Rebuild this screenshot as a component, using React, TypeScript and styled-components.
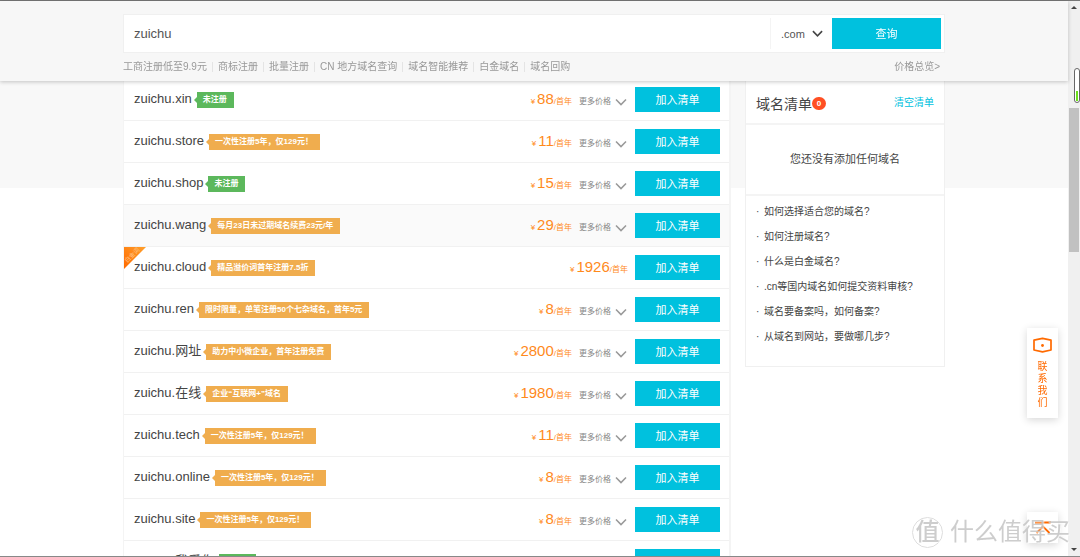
import React from 'react';
import styled, { createGlobalStyle } from 'styled-components';

const cyan = '#00c1de';
const orange = '#ff6a00';
const line = '#f4f4f4';

const GlobalStyle = createGlobalStyle`
  *, *::before, *::after { box-sizing: border-box; }
  body {
    margin: 0;
    color: #444;
    background: #fff;
    font-family: "Liberation Sans", "Noto Sans CJK SC", sans-serif;
    font-size: 10px;
    line-height: 16px;
  }
  button, input, select { font-family: inherit; margin: 0; }
  ul { list-style: none; margin: 0; padding: 0; }
  a { color: inherit; text-decoration: none; }
  svg { flex: none; }
`;

const Shell = styled.div`
  display: flex;
  height: 100vh;
  overflow: hidden;
  border-top: 1px solid #777;
  border-bottom: 1px solid #888;
`;

const Page = styled.div`
  flex: 1;
  min-width: 0;
  background: linear-gradient(#f8f8f8, #f8f8f8) no-repeat 0 0 / 100% 187px, #fff;
`;

const Header = styled.header`
  position: fixed;
  top: 1px;
  left: 0;
  right: 12px;
  z-index: 2;
  height: 80px;
  padding-top: 13px;
  background: #f7f7f7;
  box-shadow: 0 1px 4px rgba(0, 0, 0, 0.22);
`;

const Container = styled.div`
  width: 100%;
  max-width: 822px;
  margin: 0 auto;
`;

const SearchForm = styled.form`
  display: flex;
  align-items: center;
  height: 39px;
  padding: 0 3px 0 0;
  background: #fff;
  border: 1px solid #f0f0f0;
`;

const SearchInput = styled.input`
  flex: 1;
  min-width: 0;
  height: 31px;
  padding: 0 10px;
  border: 0;
  outline: 0;
  font-size: 13px;
  color: #555;
  background: transparent;
`;

const SuffixBox = styled.label`
  display: flex;
  align-items: center;
  width: 62px;
  height: 31px;
  padding-left: 10px;
  border-left: 1px solid ${line};
`;

const SuffixSelect = styled.select`
  width: 31px;
  padding: 0;
  border: 0;
  outline: 0;
  appearance: none;
  background: transparent;
  color: #555;
  font-size: 11px;
`;

const Primary = styled.button<{ $w: number; $h: number }>`
  flex: none;
  width: ${(p) => p.$w}px;
  height: ${(p) => p.$h}px;
  padding: 0;
  border: 0;
  background: ${cyan};
  color: #fff;
  font-size: 11px;
  line-height: 16px;
`;

const LinkBar = styled.nav`
  display: flex;
  align-items: center;
  justify-content: space-between;
  height: 27px;
  padding-right: 5px;
  color: #999;
`;

const QuickLinks = styled.ul`
  display: flex;
`;

const QuickLink = styled.li`
  display: flex;
  align-items: center;
  & + &::before {
    content: '';
    width: 1px;
    height: 10px;
    margin: 0 5px;
    background: #e4e4e4;
  }
`;

const Columns = styled(Container)`
  display: flex;
  align-items: flex-start;
  gap: 14px;
  padding-top: 78px;
`;

const Results = styled.ul`
  flex: 1;
  min-width: 0;
  background: #fff;
  border: solid ${line};
  border-width: 0 2px 0 1px;
`;

const Row = styled.li<{ $hover?: boolean }>`
  position: relative;
  display: flex;
  align-items: center;
  height: 42px;
  padding: 0 9px 0 10px;
  border-bottom: 1px solid #f1f1f1;
  background: ${(p) => (p.$hover ? '#fafafa' : '#fff')};
`;

const Domain = styled.span`
  padding-bottom: 2px;
  font-size: 13px;
  line-height: 20px;
  color: #444;
`;

const Tag = styled.span<{ $green?: boolean }>`
  --tag: ${(p) => (p.$green ? '#5cb85c' : '#f0ad4e')};
  display: flex;
  align-items: center;
  height: 16px;
  margin-left: 5px;
  padding: 0 7px 0 6px;
  background: var(--tag);
  color: #fff;
  font-size: 8px;
  font-weight: 700;
  white-space: nowrap;
  &::before {
    content: '';
    width: 3px;
    margin-left: -9px;
    margin-right: 6px;
    border: solid transparent;
    border-width: 3px 3px 3px 0;
    border-right-color: var(--tag);
  }
`;

const Price = styled.span`
  display: flex;
  align-items: baseline;
  margin-left: auto;
  padding-top: 1px;
  color: #ff8a1c;
  font-size: 8px;
  line-height: 20px;
`;

const Amount = styled.strong`
  margin-left: 2px;
  font-size: 15px;
  font-weight: 400;
`;

const More = styled.button`
  display: flex;
  align-items: center;
  gap: 4px;
  width: 49px;
  margin-left: 7px;
  padding: 4px 0 0;
  border: 0;
  background: none;
  color: #888;
  font-size: 8px;
  line-height: 16px;
  white-space: nowrap;
`;

const RowAction = styled.div`
  display: flex;
  margin-left: 7px;
`;

const Ribbon = styled.svg`
  position: absolute;
  top: 0;
  left: 0;
`;

const Sidebar = styled.aside`
  flex: none;
  width: 200px;
  background: #fff;
  border: 1px solid #f0f0f0;
`;

const CartHead = styled.div`
  display: flex;
  align-items: center;
  height: 45px;
  padding: 4px 10px 0;
  border-bottom: 2px solid ${line};
`;

const CartTitle = styled.h2`
  margin: 0;
  font-size: 14px;
  font-weight: 400;
  line-height: 20px;
`;

const Count = styled.span`
  width: 14px;
  height: 13px;
  border-radius: 7px;
  background: #ff4f23;
  color: #fff;
  font-size: 8px;
  font-weight: 700;
  line-height: 13px;
  text-align: center;
`;

const Clear = styled.button`
  margin-left: auto;
  padding: 0 0 2px;
  border: 0;
  background: none;
  color: ${cyan};
  font-size: 10px;
  line-height: 16px;
`;

const Empty = styled.p`
  margin: 0;
  height: 71px;
  border-bottom: 2px solid ${line};
  font-size: 11px;
  line-height: 69px;
  text-align: center;
`;

const Faq = styled.ul`
  padding: 3px 10px 17px;
  line-height: 25px;
`;

const FaqItem = styled.li`
  display: flex;
  &::before {
    content: '·';
    width: 8px;
  }
`;

const Floating = styled.button<{ $bottom: number; $h: number }>`
  position: fixed;
  right: 22px;
  bottom: ${(p) => p.$bottom}px;
  display: flex;
  flex-direction: column;
  align-items: center;
  gap: 8px;
  width: 31px;
  height: ${(p) => p.$h}px;
  padding: 9px 5px 0;
  border: 0;
  background: #fff;
  box-shadow: 0 2px 8px rgba(0, 0, 0, 0.16);
  color: ${orange};
  font-size: 10px;
  line-height: 12px;
`;

const Vertical = styled.span`
  width: 10px;
  word-break: break-all;
`;

const Watermark = styled.div`
  position: fixed;
  right: 10px;
  bottom: 9px;
  z-index: 3;
  display: flex;
  align-items: center;
  gap: 7px;
  color: rgba(196, 196, 196, 0.85);
  font-size: 24px;
  line-height: 32px;
  white-space: nowrap;
  text-shadow: 1px 1px 0 rgba(255, 255, 255, 0.5);
`;

const Seal = styled.span`
  width: 31px;
  height: 31px;
  border: 1px solid #ddd;
  border-radius: 50%;
  font-weight: 500;
  line-height: 27px;
  text-align: center;
`;

const Track = styled.div`
  display: flex;
  flex-direction: column;
  align-items: center;
  flex: none;
  width: 12px;
  padding: 4px 0;
  background: #f0f0f0;
`;

const Thumb = styled.div`
  width: 10px;
  height: 144px;
  margin: 98px 0 auto;
  background: #c1c1c1;
`;

const Meter = styled.div`
  position: fixed;
  top: 68px;
  right: 0;
  display: flex;
  align-items: flex-end;
  width: 6px;
  height: 35px;
  padding: 1px;
  border: 1px solid #666;
  border-radius: 3px;
  background: #fff;
  &::before {
    content: '';
    width: 2px;
    height: 10px;
    background: #6be01a;
  }
`;

const Chevron = ({ w, color, stroke }: { w: number; color: string; stroke: number }) => (
  <svg width={w} height={w} viewBox="0 0 12 12" fill="none" stroke={color} strokeWidth={stroke} aria-hidden="true">
    <path d="M1 3.4 6 8.6l5-5.2" />
  </svg>
);

const quickLinks = ['工商注册低至9.9元', '商标注册', '批量注册', 'CN 地方域名查询', '域名智能推荐', '白金域名', '域名回购'];

type Result = { name: string; tag: string; price: string; free?: boolean; premium?: boolean; hover?: boolean };

const fiveYears = '一次性注册5年，仅129元！';
const results: Result[] = [
  { name: 'xin', tag: '未注册', price: '88', free: true },
  { name: 'store', tag: fiveYears, price: '11' },
  { name: 'shop', tag: '未注册', price: '15', free: true },
  { name: 'wang', tag: '每月23日未过期域名续费23元/年', price: '29', hover: true },
  { name: 'cloud', tag: '精品溢价词首年注册7.5折', price: '1926', premium: true },
  { name: 'ren', tag: '限时限量，单笔注册50个七杂域名，首年5元', price: '8' },
  { name: '网址', tag: '助力中小微企业，首年注册免费', price: '2800' },
  { name: '在线', tag: '企业“互联网+”域名', price: '1980' },
  { name: 'tech', tag: fiveYears, price: '11' },
  { name: 'online', tag: fiveYears, price: '8' },
  { name: 'site', tag: fiveYears, price: '8' },
  { name: '我爱你', tag: '未注册', price: '18', free: true },
];

const faqs = ['如何选择适合您的域名?', '如何注册域名?', '什么是白金域名?', '.cn等国内域名如何提交资料审核?', '域名要备案吗，如何备案?', '从域名到网站，要做哪几步?'];

export default function App() {
  return (
    <>
      <GlobalStyle />
      <Shell>
        <Page>
          <Header>
            <Container>
              <SearchForm onSubmit={(e) => e.preventDefault()}>
                <SearchInput aria-label="域名" defaultValue="zuichu" />
                <SuffixBox>
                  <SuffixSelect aria-label="后缀" defaultValue=".com">
                    <option>.com</option>
                  </SuffixSelect>
                  <Chevron w={11} color="#444" stroke={1.7} />
                </SuffixBox>
                <Primary $w={109} $h={31}>查询</Primary>
              </SearchForm>
              <LinkBar>
                <QuickLinks>
                  {quickLinks.map((t) => (
                    <QuickLink key={t}><a href="#">{t}</a></QuickLink>
                  ))}
                </QuickLinks>
                <a href="#">价格总览&gt;</a>
              </LinkBar>
            </Container>
          </Header>
          <Columns as="main">
            <Results>
              {results.map((r) => (
                <Row key={r.name} $hover={r.hover}>
                  {r.premium && (
                    <Ribbon width="22" height="22" viewBox="0 0 22 22">
                      <defs>
                        <linearGradient id="ribbon" x1="0" y1="1" x2="1" y2="0">
                          <stop offset="0" stopColor="#ff6a00" />
                          <stop offset="1" stopColor="#ffa02c" />
                        </linearGradient>
                      </defs>
                      <path d="M0 0h22L0 22z" fill="url(#ribbon)" />
                      <text x="9" y="10" fill="#ffc68c" fontSize="6" textAnchor="middle" transform="rotate(-45 9 9)">白金词</text>
                    </Ribbon>
                  )}
                  <Domain>zuichu.{r.name}</Domain>
                  <Tag $green={r.free}>{r.tag}</Tag>
                  <Price>¥<Amount>{r.price}</Amount>/首年</Price>
                  {!r.premium && (
                    <More type="button">更多价格<Chevron w={12} color="#999" stroke={1.5} /></More>
                  )}
                  <RowAction>
                    <Primary type="button" $w={85} $h={25}>加入清单</Primary>
                  </RowAction>
                </Row>
              ))}
            </Results>
            <Sidebar>
              <CartHead>
                <CartTitle>域名清单</CartTitle>
                <Count>0</Count>
                <Clear type="button">清空清单</Clear>
              </CartHead>
              <Empty>您还没有添加任何域名</Empty>
              <Faq>
                {faqs.map((q) => (
                  <FaqItem key={q}><a href="#">{q}</a></FaqItem>
                ))}
              </Faq>
            </Sidebar>
          </Columns>
          <Floating type="button" $bottom={139} $h={90}>
            <svg width="19" height="16" viewBox="0 0 19 16" fill="none" stroke={orange} strokeWidth="1.7" strokeLinejoin="round" aria-hidden="true">
              <path d="M1 3.2 9.5 1.400 18 3.200V13L9.500 14.800 1 13z" />
              <circle cx="9.500" cy="8.500" r="1.400" fill={orange} stroke="none" />
            </svg>
            <Vertical>联系我们</Vertical>
          </Floating>
          <Floating type="button" $bottom={14} $h={31} aria-label="返回顶部">
            <svg width="18" height="14" viewBox="0 0 18 14" fill="none" stroke={orange} strokeWidth="1.8" aria-hidden="true">
              <path d="M1 1.500h16M2.500 12 9 5.500l6.500 6.500" />
            </svg>
          </Floating>
          <Watermark>
            <Seal>值</Seal>
            <span>什么值得买</span>
          </Watermark>
        </Page>
        <Track>
          <svg width="6" height="5" viewBox="0 0 6 5" aria-hidden="true"><path d="M0 4 3 1l3 3z" fill="#444" /></svg>
          <Thumb />
          <svg width="6" height="5" viewBox="0 0 6 5" aria-hidden="true"><path d="M0 1h6L3 4z" fill="#444" /></svg>
        </Track>
        <Meter />
      </Shell>
    </>
  );
}
